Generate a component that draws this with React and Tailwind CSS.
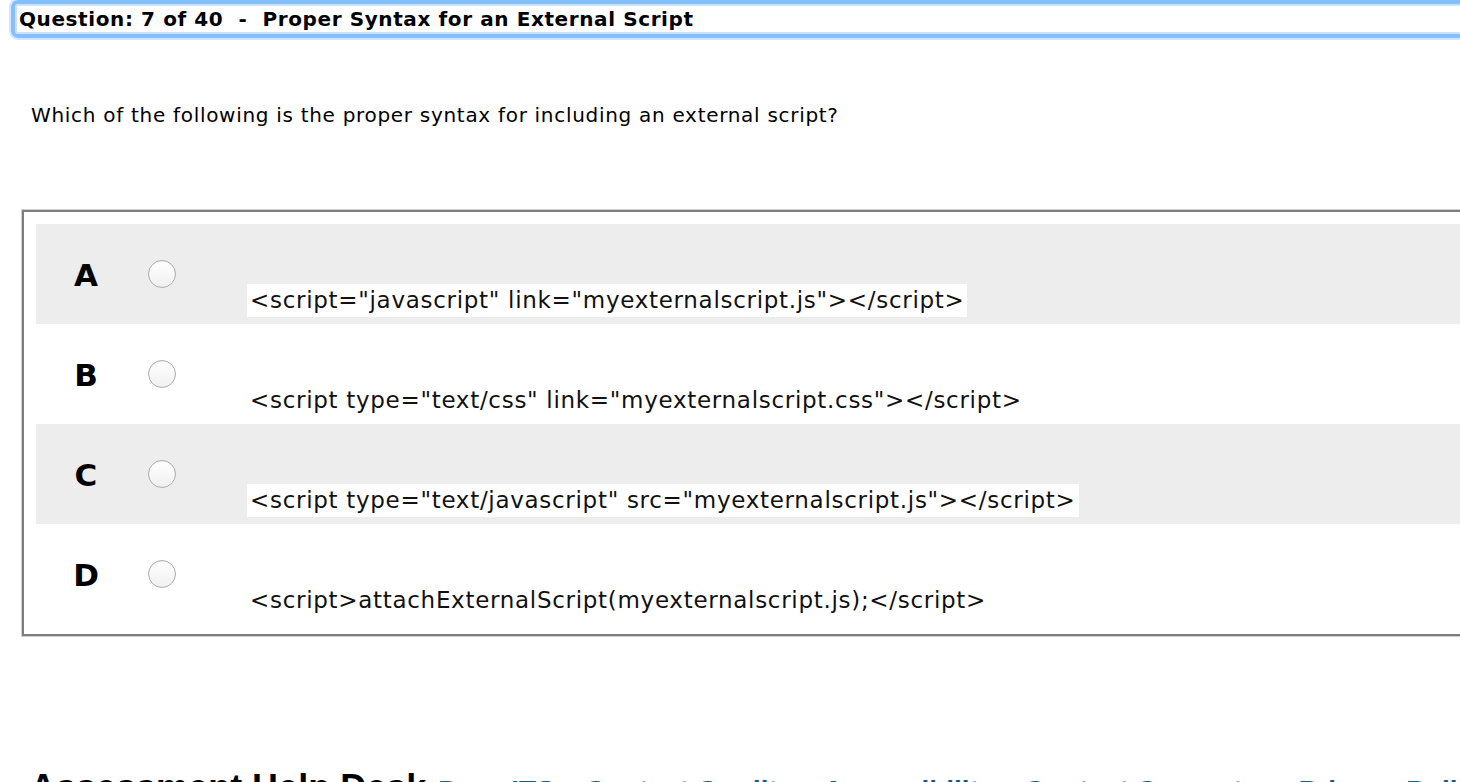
const options = [
  { key: "A", text: '<script="javascript" link="myexternalscript.js"></script>' },
  { key: "B", text: '<script type="text/css" link="myexternalscript.css"></script>' },
  { key: "C", text: '<script type="text/javascript" src="myexternalscript.js"></script>' },
  { key: "D", text: "<script>attachExternalScript(myexternalscript.js);</script>" },
]

const footerLinks = ["Drop ITS", "Contact Credits", "Accessibility", "Contact Computer", "Privacy Policy"]

const Radio = () => (
  <span className="block w-[28px] h-[28px] rounded-full border border-[#adadad] bg-linear-to-b from-white to-[#f0f0f0] shadow-[inset_0_1px_1px_rgba(0,0,0,0.06)]" />
)

const OptionRow = ({ option, shaded }) => (
  <div className={`flex items-start h-[100px] pt-[36px] ${shaded ? "bg-[#ededed]" : "bg-white"}`}>
    <div className="w-[100px] text-center font-['DejaVu_Sans',sans-serif] font-bold text-[31px] leading-[31px] text-black">
      {option.key}
    </div>
    <div className="ml-[12px]">
      <Radio />
    </div>
    <span className="ml-[71px] mt-[24px] bg-white px-[3px] h-[33px] flex items-center font-['DejaVu_Sans',sans-serif] text-[23px] tracking-[0.7px] text-[#111] whitespace-pre">
      {option.text}
    </span>
  </div>
)

export default function App() {
  return (
    <div className="w-full h-[782px] overflow-hidden bg-white font-['DejaVu_Sans',sans-serif] text-black">
      {/* question header */}
      <div className="ml-[11px] w-[1480px]">
        <div className="h-[38px] border-4 border-[#86bfff] rounded-l-[7px] shadow-[0_0_0_2px_#d3e7ff,inset_0_0_0_2px_#cbe3ff] pl-[4px] flex items-center">
          <span className="font-bold text-[20px] leading-[22px] tracking-[0.6px] whitespace-pre">
            {"Question: 7 of 40  -  Proper Syntax for an External Script"}
          </span>
        </div>
      </div>

      <p className="mt-[66px] ml-[31px] text-[20px] leading-[22px] tracking-[0.7px]">
        Which of the following is the proper syntax for including an external script?
      </p>

      {/* answers */}
      <div className="mt-[84px] ml-[22px] w-[1480px] border-2 border-[#7d7d7d] shadow-[0_0_0_1px_#cfcfcf] pt-[12px] pl-[12px] pb-[10px]">
        {options.map((option, i) => (
          <OptionRow key={option.key} option={option} shaded={i % 2 === 0} />
        ))}
      </div>

      {/* footer */}
      <div className="mt-[134px] ml-[30px] flex items-baseline whitespace-nowrap font-['Liberation_Sans',Arial,sans-serif] font-bold">
        <span className="text-[36px] leading-[36px] text-black">Assessment Help Desk</span>
        {footerLinks.map((link) => (
          <a key={link} href="#" className="ml-[12px] mr-[18px] text-[28px] text-[#115a8c]">
            {link}
          </a>
        ))}
      </div>
    </div>
  )
}
